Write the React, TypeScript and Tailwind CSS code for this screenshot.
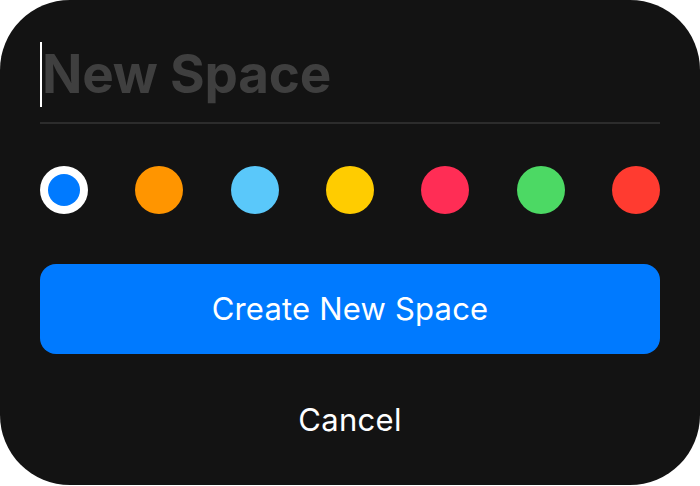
import React from "react";

const colors = ["#007AFF", "#FF9500", "#5AC8FA", "#FFCC00", "#FF2D55", "#4CD964", "#FF3B30"];

export default function App() {
  return (
    <div className="w-[700px] h-[486px] bg-white" style={{ fontFamily: "Inter, 'Noto Sans', sans-serif" }}>
      <div className="w-[700px] h-[485px] bg-[#131313] rounded-[70px] px-10 pt-[42px] flex flex-col">
        <div className="flex items-center h-[65px]">
          <div className="w-[2px] h-[65px] bg-white shrink-0" />
          <span className="text-[53px] font-bold text-[#3f3f3f] leading-none tracking-[-0.2px]">New Space</span>
        </div>
        <div className="h-[2px] bg-[#2c2c2c] mt-[15px]" />
        <div className="flex justify-between items-center mt-[42px]">
          {colors.map((c, i) =>
            i === 0 ? (
              <div key={c} className="w-12 h-12 rounded-full bg-white flex items-center justify-center">
                <div className="w-8 h-8 rounded-full" style={{ backgroundColor: c }} />
              </div>
            ) : (
              <div key={c} className="w-12 h-12 rounded-full" style={{ backgroundColor: c }} />
            )
          )}
        </div>
        <button className="mt-[50px] h-[90px] w-full rounded-[16px] bg-[#007AFF] text-white text-[31px] tracking-[0.2px] flex items-center justify-center">
          Create New Space
        </button>
        <div className="mt-[50px] text-center text-white text-[31px] leading-none tracking-[0.3px]">Cancel</div>
      </div>
    </div>
  );
}
